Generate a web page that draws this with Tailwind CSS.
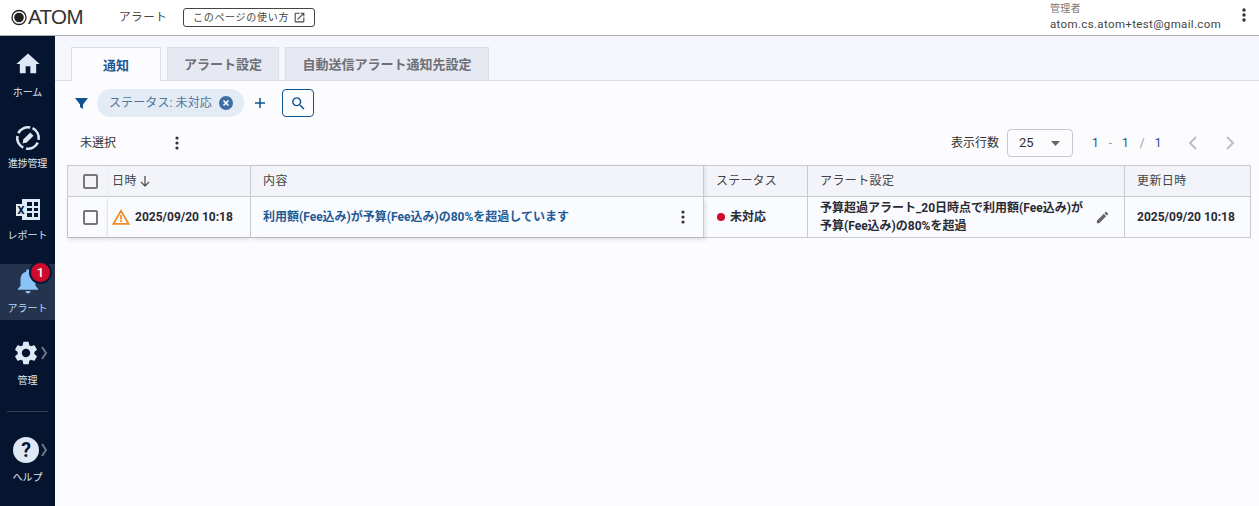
<!DOCTYPE html>
<html lang="ja"><head><meta charset="utf-8"><script src="https://cdn.jsdelivr.net/npm/@tailwindcss/browser@4"></script></head>
<body class="m-0 overflow-hidden">
<div class="w-[1259px] h-[506px] flex flex-col bg-[#fcfcff] font-['Roboto','Noto_Sans_CJK_JP',sans-serif] text-[#333]">
  <!-- header -->
  <header class="h-[36px] shrink-0 flex items-center bg-white border-b border-[#a9abae]">
    <div class="w-[119px] pl-[11px] flex items-center">
      <svg width="17" height="17" viewBox="0 0 17 17" class="shrink-0"><circle cx="8" cy="8.5" r="7" fill="none" stroke="#222" stroke-width="1.3"/><circle cx="8" cy="8.5" r="4.8" fill="#222"/></svg>
      <span class="text-[20.5px] leading-none tracking-[-0.6px] text-[#333] font-['Liberation_Sans']">ATOM</span>
    </div>
    <span class="text-[11.5px] tracking-[0.6px] text-[#444] w-[64px] pt-px">アラート</span>
    <div class="w-[132px] h-[19px] border border-[#444] rounded-[3px] flex items-center pl-[9px] text-[10px] tracking-[0.7px] text-[#444] whitespace-nowrap">このページの使い方
      <svg width="13" height="13" viewBox="0 0 24 24" class="ml-[4px] shrink-0" fill="#444"><path d="M19 19H5V5h7V3H5a2 2 0 0 0-2 2v14a2 2 0 0 0 2 2h14a2 2 0 0 0 2-2v-7h-2v7zM14 3v2h3.59l-9.83 9.83 1.41 1.41L19 6.41V10h2V3h-7z"/></svg>
    </div>
    <div class="ml-auto w-[192px] h-full flex flex-col justify-center pb-[2px]">
      <div class="text-[10px] leading-[14px] text-[#777] tracking-[0.3px]">管理者</div>
      <div class="text-[11.5px] leading-[16px] text-[#444] tracking-[0.35px]">atom.cs.atom+test@gmail.com</div>
    </div>
    <svg width="4" height="14" viewBox="0 0 4 14" class="mr-[13px] -mt-[6px]" fill="#333"><circle cx="2" cy="2" r="1.7"/><circle cx="2" cy="7" r="1.7"/><circle cx="2" cy="12" r="1.7"/></svg>
  </header>
  <div class="flex flex-1 min-h-0">
    <!-- sidebar -->
    <nav class="w-[55px] shrink-0 bg-[#06152f] flex flex-col text-[#dfe6f2] text-[10px]">
      <div class="h-[74px] flex flex-col items-center pt-[14px]">
        <svg width="28" height="28" viewBox="0 0 24 24" fill="#dfe8f5"><path d="M10 20v-6h4v6h5v-8h3L12 3 2 12h3v8z"/></svg>
        <span class="mt-[8px] leading-[14px]">ホーム</span>
      </div>
      <div class="h-[76px] flex flex-col items-center pt-[15px]">
        <svg width="26" height="26" viewBox="0 0 26 26" fill="none"><circle cx="13" cy="13" r="10.8" stroke="#dfe8f5" stroke-width="2.5" stroke-dasharray="14 2.960" transform="rotate(-65 13 13)"/><path d="M7.500 18.500l1-4.200 6.800-6.800 3.200 3.200-6.800 6.800z" fill="#dfe8f5"/></svg>
        <span class="mt-[6px] leading-[14px] -tracking-[0.2px]">進捗管理</span>
      </div>
      <div class="h-[78px] flex flex-col items-center pt-[11px]">
        <svg width="24" height="24" viewBox="0 0 24 24"><path d="M6 2h18v21H6z" fill="#dfe8f5"/><path d="M11 5h5v4h-5zM18 5h4v4h-4zM11 11h5v3h-5zM18 11h4v3h-4zM11 16h5v4h-5zM18 16h4v4h-4z" fill="#06152f"/><path d="M0 7h10v12H0z" fill="#dfe8f5"/><text x="5" y="17" text-anchor="middle" font-size="11" font-weight="700" fill="#06152f" font-family="Roboto">X</text></svg>
        <span class="mt-[8px] leading-[14px]">レポート</span>
      </div>
      <div class="relative h-[56px] bg-[#24344f] flex flex-col items-center pt-[2px]">
        <svg width="30" height="30" viewBox="0 0 24 24" fill="#8cc3f7"><path d="M12 22c1.1 0 2-.9 2-2h-4c0 1.1.9 2 2 2zm6-6v-5c0-3.07-1.63-5.64-4.5-6.32V4c0-.83-.67-1.5-1.5-1.5s-1.500.67-1.500 1.500v.68C7.640 5.360 6 7.920 6 11v5l-2 2v1h16v-1l-2-2z"/></svg>
        <span class="mt-[6px] leading-[14px] text-[#b9d9f7]">アラート</span>
        <span class="absolute left-[29px] top-[-3px] w-[23px] h-[23px] rounded-full bg-[#cf0a2c] border-[2px] border-[#0a1a36] flex items-center justify-center text-white text-[13px] font-medium leading-none">1</span>
      </div>
      <div class="relative h-[91px] flex flex-col items-center pt-[19px]">
        <svg width="28" height="28" viewBox="0 0 24 24" fill="#dfe8f5" class="-ml-[3px]"><path d="M19.14 12.94c.04-.3.06-.61.06-.94 0-.32-.02-.64-.07-.94l2.030-1.580a.49.49 0 0 0 .12-.61l-1.920-3.320a.488.488 0 0 0-.59-.22l-2.390.96c-.5-.38-1.030-.7-1.620-.94l-.36-2.540a.484.484 0 0 0-.48-.41h-3.840c-.24 0-.43.170-.47.410l-.36 2.540c-.59.24-1.130.570-1.620.94l-2.390-.96c-.22-.08-.47 0-.59.22L2.740 8.870c-.12.210-.08.470.12.610l2.030 1.580c-.05.3-.09.630-.09.94s.2.640.07.940l-2.030 1.580a.49.49 0 0 0-.12.610l1.920 3.320c.12.220.37.290.59.220l2.390-.96c.5.380 1.030.7 1.620.94l.36 2.540c.05.240.24.410.48.410h3.840c.24 0 .44-.170.47-.410l.36-2.540c.59-.24 1.130-.560 1.620-.94l2.390.96c.22.080.47 0 .59-.22l1.920-3.320c.12-.22.070-.47-.12-.61l-2.010-1.580zM12 15.600A3.610 3.610 0 0 1 8.400 12c0-1.980 1.620-3.600 3.600-3.600s3.600 1.620 3.600 3.600-1.620 3.600-3.600 3.600z"/></svg>
        <svg width="7" height="14" viewBox="0 0 7 14" fill="none" stroke="#6f7888" stroke-width="2" class="absolute left-[41px] top-[26px]"><path d="M1 1l4 6-4 6"/></svg>
        <span class="mt-[7px] leading-[14px]">管理</span>
      </div>
      <div class="mx-[7px] h-px bg-[#333f54] shrink-0"></div>
      <div class="relative flex-1 flex flex-col items-center pt-[25px]">
        <svg width="26" height="26" viewBox="0 0 24 24" class="-ml-[3px]"><circle cx="12" cy="12" r="12" fill="#dfe8f5"/><text x="12" y="18.500" text-anchor="middle" font-size="18" font-weight="700" fill="#06152f" font-family="Roboto">?</text></svg>
        <svg width="7" height="14" viewBox="0 0 7 14" fill="none" stroke="#6f7888" stroke-width="2" class="absolute left-[41px] top-[31px]"><path d="M1 1l4 6-4 6"/></svg>
        <span class="mt-[8px] leading-[14px]">ヘルプ</span>
      </div>
    </nav>
    <!-- main -->
    <main class="flex-1 min-w-0 flex flex-col">
      <div class="h-[45px] shrink-0 bg-[#f5f7fc] border-b border-[#d9dfe9] flex items-end pl-[16px] gap-[6px] text-[13px] font-bold">
        <div class="w-[90px] h-[34px] -mb-px pt-[2px] bg-[#fcfcff] border border-b-0 border-[#d9dfe9] flex items-center justify-center text-[#1e5a94]">通知</div>
        <div class="w-[112px] h-[33px] pt-[2px] bg-[#e6e9f1] border border-b-0 border-[#d9dfe9] flex items-center justify-center text-[#6d7079]">アラート設定</div>
        <div class="w-[204px] h-[33px] pt-[2px] bg-[#e6e9f1] border border-b-0 border-[#d9dfe9] flex items-center justify-center text-[#6d7079]">自動送信アラート通知先設定</div>
      </div>
      <div class="h-[44px] shrink-0 flex items-center pl-[20px]">
        <svg width="13" height="13" viewBox="0 0 13 13" fill="#0f528f"><path d="M0 1h13L8 7.500V12l-3-2V7.500z"/></svg>
        <div class="ml-[9px] w-[147px] h-[28px] rounded-full bg-[#e3ebf5] flex items-center pl-[12px] text-[12px] text-[#50739a] tracking-[0.1px] whitespace-nowrap">ステータス: 未対応
          <svg width="14" height="14" viewBox="0 0 14 14" class="ml-[7px] shrink-0"><circle cx="7" cy="7" r="7" fill="#3c6ea4"/><path d="M4.500 4.500l5 5M9.500 4.500l-5 5" stroke="#fff" stroke-width="1.600"/></svg>
        </div>
        <svg width="12" height="12" viewBox="0 0 12 12" class="ml-[10px]" stroke="#0f528f" stroke-width="1.500"><path d="M6 1v10M1 6h10"/></svg>
        <div class="ml-[16px] w-[32px] h-[28px] border border-[#0f528f] rounded-[4px] flex items-center justify-center">
          <svg width="17" height="17" viewBox="0 0 24 24" fill="#0f528f"><path d="M15.500 14h-.79l-.28-.27A6.470 6.470 0 0 0 16 9.500 6.500 6.500 0 1 0 9.500 16c1.610 0 3.090-.59 4.230-1.570l.27.28v.79l5 4.990L20.490 19l-4.990-5zm-6 0C7.010 14 5 11.990 5 9.500S7.010 5 9.500 5 14 7.010 14 9.500 11.990 14 9.500 14z"/></svg>
        </div>
      </div>
      <div class="h-[40px] shrink-0 flex items-center pb-[4px] pl-[25px] pr-[24px] text-[12px] text-[#333]">
        <span class="w-[95px]">未選択</span>
        <svg width="4" height="14" viewBox="0 0 4 14" fill="#333"><circle cx="2" cy="2" r="1.600"/><circle cx="2" cy="7" r="1.600"/><circle cx="2" cy="12" r="1.600"/></svg>
        <span class="ml-auto">表示行数</span>
        <div class="ml-[8px] w-[66px] h-[28px] border border-[#c6c8cc] rounded-[4px] flex items-center pl-[11px] pr-[12px] justify-between text-[13px]">25
          <svg width="9" height="5" viewBox="0 0 9 5" fill="#666"><path d="M0 0h9L4.500 5z"/></svg>
        </div>
        <span class="ml-[19px] w-[96px] flex text-[12px] text-[#1b4f85] whitespace-nowrap"><span>1</span><span class="ml-[10px] text-[#999]">-</span><span class="ml-[10px]">1</span><span class="ml-[11px] text-[#999]">/</span><span class="ml-[10px]">1</span></span>
        <svg width="10" height="14" viewBox="0 0 10 14" fill="none" stroke="#b6bcc6" stroke-width="1.800"><path d="M8 1L2 7l6 6"/></svg>
        <svg width="10" height="14" viewBox="0 0 10 14" fill="none" stroke="#b6bcc6" stroke-width="1.800" class="ml-[27px]"><path d="M2 1l6 6-6 6"/></svg>
      </div>
      <!-- table -->
      <div class="ml-[12px] w-[1184px] grid grid-cols-[40px_143px_453px_104px_317px_125px] border border-[#c8cad0] text-[12px]">
        <div class="h-[31px] bg-[#f3f4f9] border-b border-r border-b-[#c8cad0] border-r-[#eceef4] flex items-center pl-[15px]"><span class="w-[15px] h-[15px] border-2 border-[#777] rounded-[2px]"></span></div>
        <div class="h-[31px] bg-[#f3f4f9] border-b border-r border-[#c8cad0] flex items-center pl-[4px] tracking-[0.4px] text-[#444] pb-px">日時
          <svg width="12" height="12" viewBox="0 0 12 12" class="ml-[2px]" fill="none" stroke="#555" stroke-width="1.300"><path d="M6 1v10M2 7l4 4 4-4"/></svg>
        </div>
        <div class="relative z-10 h-[31px] bg-[#f3f4f9] border-b border-r border-[#c8cad0] flex items-center pl-[12px] tracking-[0.4px] text-[#444] shadow-[2px_0_3px_rgba(0,0,0,0.08)]">内容</div>
        <div class="h-[31px] bg-[#f3f4f9] border-b border-r border-[#c8cad0] flex items-center pl-[12px] tracking-[0.2px] text-[#444]">ステータス</div>
        <div class="h-[31px] bg-[#f3f4f9] border-b border-r border-[#c8cad0] flex items-center pl-[12px] tracking-[0.4px] text-[#444]">アラート設定</div>
        <div class="h-[31px] bg-[#f3f4f9] border-b border-[#c8cad0] flex items-center pl-[12px] tracking-[0.4px] text-[#444]">更新日時</div>

        <div class="h-[40px] bg-[#fafbff] border-r border-[#eef0f6] flex items-center pl-[15px] shadow-[0_3px_4px_rgba(0,0,0,0.1)]"><span class="w-[15px] h-[15px] border-2 border-[#777] rounded-[2px]"></span></div>
        <div class="h-[40px] bg-[#fafbff] border-r border-[#c8cad0] flex items-center pl-[4px] font-bold text-[#2a2a33] whitespace-nowrap shadow-[0_3px_4px_rgba(0,0,0,0.1)]">
          <svg width="18" height="16" viewBox="0 0 18 16" fill="none" class="mr-[5px] shrink-0"><path d="M9 1.800L16.600 14.900H1.400z" stroke="#f08a24" stroke-width="1.800"/><path d="M9 6v4.500M9 11.300v1.700" stroke="#f08a24" stroke-width="1.700"/></svg>2025/09/20 10:18</div>
        <div class="relative z-10 h-[40px] bg-[#fafbff] border-r border-[#c8cad0] flex items-center pl-[12px] pr-[18px] justify-between font-bold text-[#1e5a94] shadow-[2px_3px_4px_rgba(0,0,0,0.1)]">
          <span>利用額(Fee込み)が予算(Fee込み)の80%を超過しています</span>
          <svg width="4" height="14" viewBox="0 0 4 14" fill="#333"><circle cx="2" cy="2" r="1.600"/><circle cx="2" cy="7" r="1.600"/><circle cx="2" cy="12" r="1.600"/></svg>
        </div>
        <div class="h-[40px] bg-[#fafbff] border-r border-[#c8cad0] flex items-center pl-[13px] font-bold text-[#2a2a33]"><span class="w-[8px] h-[8px] rounded-full bg-[#cf0a2c] mr-[5px]"></span>未対応</div>
        <div class="h-[40px] bg-[#fafbff] border-r border-[#c8cad0] flex items-center pl-[12px] pr-[14px] justify-between font-bold text-[#2a2a33] leading-[18px]">
          <span class="w-[270px]">予算超過アラート_20日時点で利用額(Fee込み)が<br>予算(Fee込み)の80%を超過</span>
          <svg width="15" height="15" viewBox="0 0 24 24" fill="#666"><path d="M3 17.250V21h3.750L17.810 9.940l-3.750-3.750L3 17.250zM20.710 7.040a1 1 0 0 0 0-1.410l-2.340-2.340a1 1 0 0 0-1.410 0l-1.830 1.830 3.750 3.750 1.830-1.830z"/></svg>
        </div>
        <div class="h-[40px] bg-[#fafbff] flex items-center pl-[12px] font-bold text-[#2a2a33] whitespace-nowrap">2025/09/20 10:18</div>
      </div>
    </main>
  </div>
</div>
</body></html>
